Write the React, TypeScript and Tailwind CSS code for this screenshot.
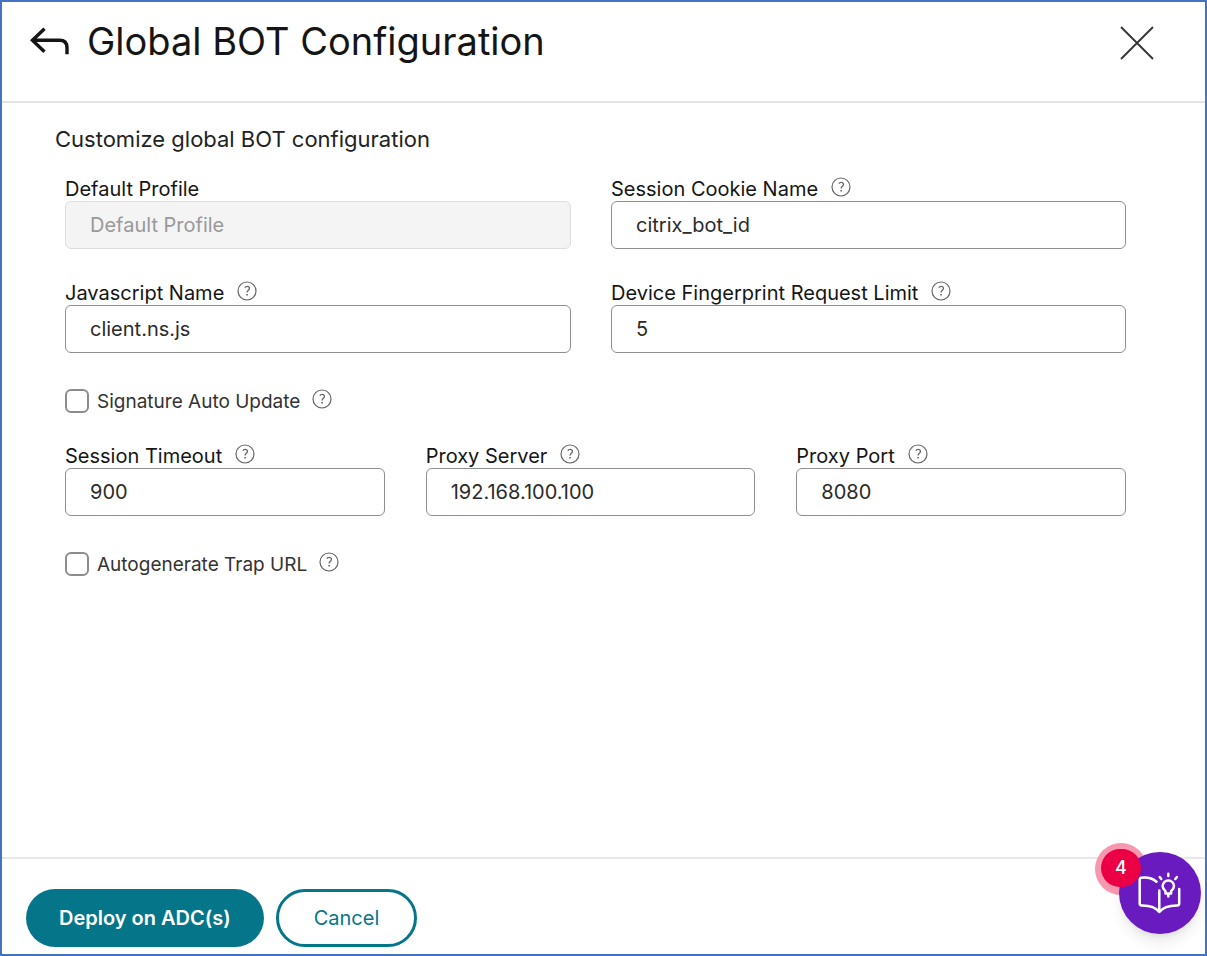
import React from "react";

function HelpButton({ topic }: { topic: string }) {
  return (
    <button type="button" aria-label={`Help: ${topic}`} className="flex h-5 w-5 shrink-0 items-center justify-center text-[#666666]">
      <svg viewBox="0 0 20 20" className="h-5 w-5" fill="none" stroke="currentColor" strokeWidth="1.2">
        <circle cx="10" cy="10" r="9" />
        <path d="M7.8 6.6c.5-.8 1.3-1.2 2.3-1.2 1.4 0 2.3.8 2.3 2 0 1.9-2.3 2-2.3 4.2" strokeWidth="1.3" />
        <path d="M9.3 13.8h1.6" strokeWidth="1.6" />
      </svg>
    </button>
  );
}

type FieldProps = {
  id: string;
  label: string;
  value?: string;
  placeholder?: string;
  disabled?: boolean;
  help?: boolean;
};

function Field({ id, label, value, placeholder, disabled, help = true }: FieldProps) {
  return (
    <div className="min-w-0">
      <div className="flex h-[26px] items-start gap-[13px] pt-[2px]">
        <label htmlFor={id} className="text-xl leading-6 whitespace-nowrap text-[#151515]">{label}</label>
        {help && <HelpButton topic={label} />}
      </div>
      <input
        id={id}
        type="text"
        defaultValue={value}
        placeholder={placeholder}
        disabled={disabled}
        className="block h-12 w-full rounded-md border border-[#8f8f8f] bg-white px-6 text-xl text-[#2b2b2b] placeholder:text-[#999999] disabled:border-[#dedede] disabled:bg-[#f4f4f4]"
      />
    </div>
  );
}

function CheckField({ id, label }: { id: string; label: string }) {
  return (
    <div className="flex h-6 items-start">
      <input id={id} type="checkbox" className="h-6 w-6 shrink-0 appearance-none rounded-md border-2 border-[#8c8c8c] bg-white checked:bg-[#05768a]" />
      <label htmlFor={id} className="mr-3 pt-px pl-2 text-[19px] leading-6 text-[#333333]">{label}</label>
      <HelpButton topic={label} />
    </div>
  );
}

export default function App() {
  return (
    <div className="relative flex min-h-screen flex-col border-2 border-[#4472c4] bg-white font-['Inter','Liberation_Sans',sans-serif]">
      <header className="flex h-[101px] items-start justify-between border-b-2 border-[#e4e4e4] pt-[15px] pr-[51px] pl-7">
        <div className="flex items-center gap-[17px]">
          <button type="button" aria-label="Back" className="text-[#151515]">
            <svg viewBox="0 0 40 28" className="h-7 w-10" fill="none" stroke="currentColor" strokeWidth="3.4">
              <path d="M14.5 1.8 2.4 13.2 14.5 24.8M2.8 13.2H29.5q7.5 0 7.5 7.5V27.3" />
            </svg>
          </button>
          <h1 className="text-[38px] leading-12 text-[#151515]">Global BOT Configuration</h1>
        </div>
        <button type="button" aria-label="Close" className="mt-[9px] text-[#333333]">
          <svg viewBox="0 0 34 34" className="h-[34px] w-[34px]" fill="none" stroke="currentColor" strokeWidth="1.8">
            <path d="M1 1 33 33M33 1 1 33" />
          </svg>
        </button>
      </header>

      <main className="flex-1 pt-[22px] pr-[79px] pl-[63px]">
        <h2 className="-ml-[10px] text-[22px] leading-7 text-[#222222]">Customize global BOT configuration</h2>
        <form className="mt-[22px]">
          <div className="grid grid-cols-[506fr_515fr] gap-x-10 gap-y-[30px]">
            <Field id="profile" label="Default Profile" placeholder="Default Profile" disabled help={false} />
            <Field id="cookie" label="Session Cookie Name" value="citrix_bot_id" />
            <Field id="script" label="Javascript Name" value="client.ns.js" />
            <Field id="limit" label="Device Fingerprint Request Limit" value="5" />
          </div>
          <div className="mt-9 mb-[29px]">
            <CheckField id="signature" label="Signature Auto Update" />
          </div>
          <div className="grid grid-cols-[32fr_33fr_33fr] gap-x-[41px]">
            <Field id="timeout" label="Session Timeout" value="900" />
            <Field id="server" label="Proxy Server" value="192.168.100.100" />
            <Field id="port" label="Proxy Port" value="8080" />
          </div>
          <div className="mt-9">
            <CheckField id="trap" label="Autogenerate Trap URL" />
          </div>
        </form>
      </main>

      <footer className="flex h-[97px] items-start gap-3 border-t-2 border-[#e8e8e8] pt-[30px] pl-6">
        <button type="button" className="h-[58px] rounded-full bg-[#05768a] px-[33px] text-xl font-semibold text-white">Deploy on ADC(s)</button>
        <button type="button" className="h-[58px] rounded-full border-3 border-[#05768a] bg-white px-[35px] text-xl text-[#05768a]">Cancel</button>
      </footer>

      <div className="absolute right-1 bottom-5 h-[82px] w-[82px]">
        <span className="absolute -top-[9px] -left-6 h-[52px] w-[52px] rounded-full bg-[#f897b0]" />
        <button type="button" aria-label="Guides, 4 new" className="absolute inset-0 rounded-full bg-[#6a1bbf] text-white shadow-lg">
          <svg viewBox="0 0 82 82" className="h-full w-full" fill="none" stroke="currentColor" strokeWidth="2.5" strokeLinecap="round" strokeLinejoin="round">
            <path d="M37.5 29.7C33.5 26.2 27.5 25.2 22.5 25.7Q20.7 25.9 20.7 27.6V51.5q0 1.9 1.9 1.9C29.5 53.3 36.5 54.5 40.3 60C44.5 54.5 52 53.3 58.3 53.4Q60.2 53.4 60.2 51.5V37M40.3 38.5V59.5" />
            <path d="M46.5 41.5v-2.3c-1.7-1.5-2.9-2.9-2.9-5.1a5.7 5.7 0 0 1 11.4 0c0 2.2-1.2 3.6-2.9 5.1v2.3zM49.3 44.5V42" />
            <path d="M49.3 24v-2.3M42.3 27l-1.6-2M56.3 27l1.6-2" />
          </svg>
        </button>
        <span className="absolute -top-[3px] -left-[18px] flex h-[38px] w-10 items-center justify-center rounded-full bg-[#eb0045] text-lg font-medium text-white">4</span>
      </div>
    </div>
  );
}
